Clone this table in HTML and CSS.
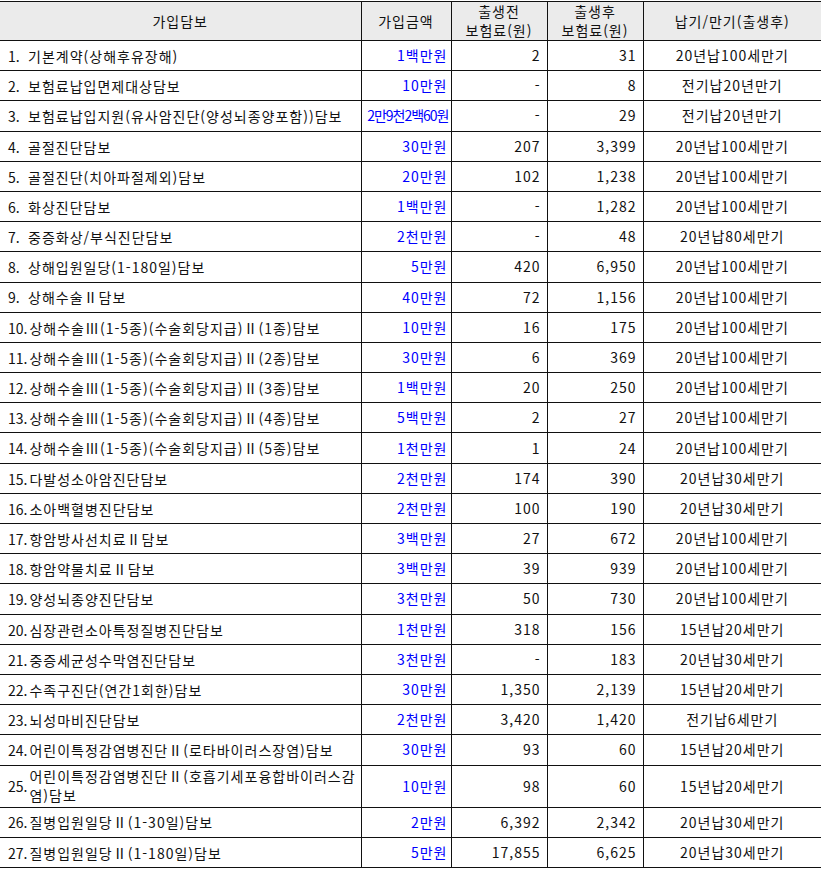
FILE: index.html
```html
<!DOCTYPE html>
<html lang="ko">
<head>
<meta charset="utf-8">
<title>가입담보</title>
<link rel="stylesheet" href="styles.css">
</head>
<body>
<table class="cov">
  <colgroup>
    <col class="c1"><col class="c2"><col class="c3"><col class="c4"><col class="c5">
  </colgroup>
  <thead>
    <tr>
      <th>가입담보</th>
      <th>가입금액</th>
      <th>출생전<br>보험료(원)</th>
      <th>출생후<br>보험료(원)</th>
      <th>납기/만기(출생후)</th>
    </tr>
  </thead>
  <tbody>
    <tr><td class="name"><span class="num">1.</span><span class="txt">기본계약(상해후유장해)</span></td><td class="amt">1백만원</td><td class="pr">2</td><td class="pr">31</td><td class="term">20년납100세만기</td></tr>
    <tr><td class="name"><span class="num">2.</span><span class="txt">보험료납입면제대상담보</span></td><td class="amt">10만원</td><td class="pr">-</td><td class="pr">8</td><td class="term">전기납20년만기</td></tr>
    <tr><td class="name"><span class="num">3.</span><span class="txt">보험료납입지원(유사암진단(양성뇌종양포함))담보</span></td><td class="amt tight">2만9천2백60원</td><td class="pr">-</td><td class="pr">29</td><td class="term">전기납20년만기</td></tr>
    <tr><td class="name"><span class="num">4.</span><span class="txt">골절진단담보</span></td><td class="amt">30만원</td><td class="pr">207</td><td class="pr">3,399</td><td class="term">20년납100세만기</td></tr>
    <tr><td class="name"><span class="num">5.</span><span class="txt">골절진단(치아파절제외)담보</span></td><td class="amt">20만원</td><td class="pr">102</td><td class="pr">1,238</td><td class="term">20년납100세만기</td></tr>
    <tr><td class="name"><span class="num">6.</span><span class="txt">화상진단담보</span></td><td class="amt">1백만원</td><td class="pr">-</td><td class="pr">1,282</td><td class="term">20년납100세만기</td></tr>
    <tr><td class="name"><span class="num">7.</span><span class="txt">중증화상/부식진단담보</span></td><td class="amt">2천만원</td><td class="pr">-</td><td class="pr">48</td><td class="term">20년납80세만기</td></tr>
    <tr><td class="name"><span class="num">8.</span><span class="txt">상해입원일당(1-180일)담보</span></td><td class="amt">5만원</td><td class="pr">420</td><td class="pr">6,950</td><td class="term">20년납100세만기</td></tr>
    <tr><td class="name"><span class="num">9.</span><span class="txt">상해수술Ⅱ담보</span></td><td class="amt">40만원</td><td class="pr">72</td><td class="pr">1,156</td><td class="term">20년납100세만기</td></tr>
    <tr><td class="name"><span class="num">10.</span><span class="txt">상해수술Ⅲ(1-5종)(수술회당지급)Ⅱ(1종)담보</span></td><td class="amt">10만원</td><td class="pr">16</td><td class="pr">175</td><td class="term">20년납100세만기</td></tr>
    <tr><td class="name"><span class="num">11.</span><span class="txt">상해수술Ⅲ(1-5종)(수술회당지급)Ⅱ(2종)담보</span></td><td class="amt">30만원</td><td class="pr">6</td><td class="pr">369</td><td class="term">20년납100세만기</td></tr>
    <tr><td class="name"><span class="num">12.</span><span class="txt">상해수술Ⅲ(1-5종)(수술회당지급)Ⅱ(3종)담보</span></td><td class="amt">1백만원</td><td class="pr">20</td><td class="pr">250</td><td class="term">20년납100세만기</td></tr>
    <tr><td class="name"><span class="num">13.</span><span class="txt">상해수술Ⅲ(1-5종)(수술회당지급)Ⅱ(4종)담보</span></td><td class="amt">5백만원</td><td class="pr">2</td><td class="pr">27</td><td class="term">20년납100세만기</td></tr>
    <tr><td class="name"><span class="num">14.</span><span class="txt">상해수술Ⅲ(1-5종)(수술회당지급)Ⅱ(5종)담보</span></td><td class="amt">1천만원</td><td class="pr">1</td><td class="pr">24</td><td class="term">20년납100세만기</td></tr>
    <tr><td class="name"><span class="num">15.</span><span class="txt">다발성소아암진단담보</span></td><td class="amt">2천만원</td><td class="pr">174</td><td class="pr">390</td><td class="term">20년납30세만기</td></tr>
    <tr><td class="name"><span class="num">16.</span><span class="txt">소아백혈병진단담보</span></td><td class="amt">2천만원</td><td class="pr">100</td><td class="pr">190</td><td class="term">20년납30세만기</td></tr>
    <tr><td class="name"><span class="num">17.</span><span class="txt">항암방사선치료Ⅱ담보</span></td><td class="amt">3백만원</td><td class="pr">27</td><td class="pr">672</td><td class="term">20년납100세만기</td></tr>
    <tr><td class="name"><span class="num">18.</span><span class="txt">항암약물치료Ⅱ담보</span></td><td class="amt">3백만원</td><td class="pr">39</td><td class="pr">939</td><td class="term">20년납100세만기</td></tr>
    <tr><td class="name"><span class="num">19.</span><span class="txt">양성뇌종양진단담보</span></td><td class="amt">3천만원</td><td class="pr">50</td><td class="pr">730</td><td class="term">20년납100세만기</td></tr>
    <tr><td class="name"><span class="num">20.</span><span class="txt">심장관련소아특정질병진단담보</span></td><td class="amt">1천만원</td><td class="pr">318</td><td class="pr">156</td><td class="term">15년납20세만기</td></tr>
    <tr><td class="name"><span class="num">21.</span><span class="txt">중증세균성수막염진단담보</span></td><td class="amt">3천만원</td><td class="pr">-</td><td class="pr">183</td><td class="term">20년납30세만기</td></tr>
    <tr><td class="name"><span class="num">22.</span><span class="txt">수족구진단(연간1회한)담보</span></td><td class="amt">30만원</td><td class="pr">1,350</td><td class="pr">2,139</td><td class="term">15년납20세만기</td></tr>
    <tr><td class="name"><span class="num">23.</span><span class="txt">뇌성마비진단담보</span></td><td class="amt">2천만원</td><td class="pr">3,420</td><td class="pr">1,420</td><td class="term">전기납6세만기</td></tr>
    <tr><td class="name"><span class="num">24.</span><span class="txt">어린이특정감염병진단Ⅱ(로타바이러스장염)담보</span></td><td class="amt">30만원</td><td class="pr">93</td><td class="pr">60</td><td class="term">15년납20세만기</td></tr>
    <tr class="tall"><td class="name"><span class="num">25.</span><span class="txt">어린이특정감염병진단Ⅱ(호흡기세포융합바이러스감염)담보</span></td><td class="amt">10만원</td><td class="pr">98</td><td class="pr">60</td><td class="term">15년납20세만기</td></tr>
    <tr><td class="name"><span class="num">26.</span><span class="txt">질병입원일당Ⅱ(1-30일)담보</span></td><td class="amt">2만원</td><td class="pr">6,392</td><td class="pr">2,342</td><td class="term">20년납30세만기</td></tr>
    <tr><td class="name"><span class="num">27.</span><span class="txt">질병입원일당Ⅱ(1-180일)담보</span></td><td class="amt">5만원</td><td class="pr">17,855</td><td class="pr">6,625</td><td class="term">20년납30세만기</td></tr>
  </tbody>
</table>
</body>
</html>
```
FILE: styles.css
```css
html, body {
  margin: 0;
  padding: 0;
  background: #ffffff;
}
body {
  padding-top: 1px;
  font-family: "Noto Sans CJK KR", "Noto Sans", sans-serif;
  font-size: 14px;
  letter-spacing: 1px;
  color: #111111;
}
.cov {
  width: 821px;
  border-collapse: collapse;
  table-layout: fixed;
  border-top: 1px solid #111;
  border-bottom: 1px solid #111;
}
.c1 { width: 361px; }
.c2 { width: 90px; }
.c3 { width: 96px; }
.c4 { width: 96px; }
.c5 { width: 178px; }

.cov th {
  background: #ebebeb;
  font-weight: normal;
  line-height: 19px;
  height: 38px;
  padding: 0;
  text-align: center;
  vertical-align: middle;
  border-bottom: 1px solid #111;
  border-left: 1px solid #111;
}
.cov th:first-child, .cov td:first-child { border-left: none; }

.cov tbody tr { height: 30.2px; }
.cov td {
  padding: 0;
  line-height: 17px;
  vertical-align: middle;
  border-top: 1px solid #111;
  border-left: 1px solid #111;
  white-space: nowrap;
}
.cov tr.tall { height: 42px; }
.cov tr.tall td { white-space: normal; }
.cov tr.tall .txt { line-height: 19px; }

.name {
  padding-left: 8px !important;
}
.name .num {
  display: inline-block;
  min-width: 18px;
  margin-right: 2px;
  letter-spacing: 0;
  vertical-align: middle;
}
.name .txt {
  display: inline-block;
  vertical-align: middle;
  max-width: 328px;
  white-space: normal;
}
.amt {
  text-align: right;
  color: #0000ff;
  padding-right: 3px !important;
}
.amt.tight {
  letter-spacing: -1px;
  padding-right: 2px !important;
}
.pr {
  text-align: right;
  padding-right: 6px !important;
}
.term {
  text-align: center;
}
```
